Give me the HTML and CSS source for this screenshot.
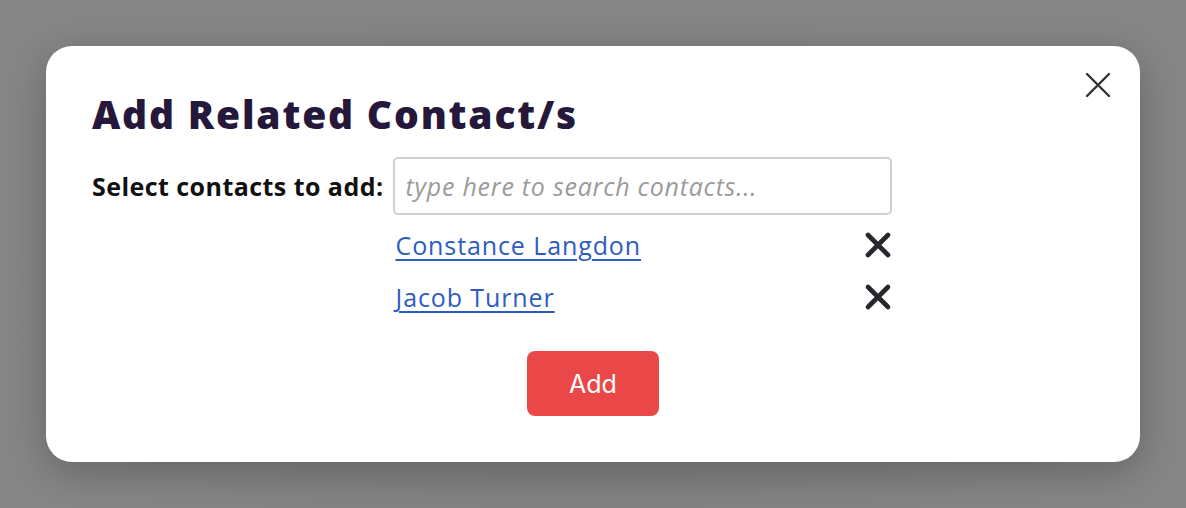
FILE: index.html
```html
<!DOCTYPE html>
<html>
<head>
<meta charset="utf-8">
<link rel="stylesheet" href="styles.css">
</head>
<body>
<div class="overlay">
  <div class="modal">
    <button class="close" aria-label="Close">
      <svg width="26" height="26" viewBox="0 0 26 26"><path d="M2 2 L24 24 M24 2 L2 24" stroke="#333" stroke-width="2.4" stroke-linecap="round"/></svg>
    </button>
    <h1 class="title">Add Related Contact/s</h1>
    <div class="row">
      <label class="label">Select contacts to add:</label>
      <div class="field">
        <input class="search" type="text" placeholder="type here to search contacts...">
        <ul class="list">
          <li class="item"><a href="#" class="link">Constance Langdon</a>
            <svg class="remove" width="28" height="28" viewBox="0 0 28 28"><path d="M4 4 L24 24 M24 4 L4 24" stroke="#24272b" stroke-width="4.6" stroke-linecap="round"/></svg></li>
          <li class="item"><a href="#" class="link">Jacob Turner</a>
            <svg class="remove" width="28" height="28" viewBox="0 0 28 28"><path d="M4 4 L24 24 M24 4 L4 24" stroke="#24272b" stroke-width="4.6" stroke-linecap="round"/></svg></li>
        </ul>
      </div>
    </div>
    <div class="actions">
      <button class="add">Add</button>
    </div>
  </div>
</div>
</body>
</html>
```
FILE: styles.css
```css
html, body { margin: 0; padding: 0; }
body { width: 1186px; height: 508px; overflow: hidden; background: #858585; font-family: "Open Sans", sans-serif; }
.overlay { padding: 46px 46px 0 46px; height: 508px; box-sizing: border-box; background: radial-gradient(ellipse at 50% 60%, #7c7c7c 0%, #868686 70%); }
.modal { position: relative; background: #fff; border-radius: 26px; height: 416px; box-sizing: border-box; padding: 40px 46px 0 46px; box-shadow: 0 10px 40px rgba(0,0,0,0.25); }
.close { position: absolute; top: 26px; right: 29px; background: none; border: 0; padding: 0; width: 26px; height: 26px; cursor: pointer; }
.close svg { display: block; }
.title { margin: 0; font-family: "Open Sans", sans-serif; font-weight: 800; font-size: 39px; line-height: 56px; color: #25183a; letter-spacing: 1.8px; }
.row { display: flex; align-items: flex-start; margin-top: 15px; gap: 9px; }
.label { font-family: "Open Sans", sans-serif; font-weight: 700; font-size: 25px; line-height: 58px; color: #111; letter-spacing: 0.45px; }
.field { width: 499px; flex: none; }
.search { display: block; width: 499px; height: 58px; box-sizing: border-box; border: 2px solid #d0d0d0; border-radius: 5px; padding: 0 11px; font-family: "Open Sans", sans-serif; font-size: 25px; letter-spacing: 0.75px; outline: none; }
.search::placeholder { color: #9b9b9b; font-style: italic; }
.list { list-style: none; margin: 4px 0 0 0; padding: 0; }
.item { display: flex; justify-content: space-between; align-items: center; height: 52px; padding-left: 3px; }
.link { font-family: "Open Sans", sans-serif; font-size: 25px; color: #2e5cbf; text-decoration: underline; text-underline-offset: 4px; text-decoration-thickness: 2px; letter-spacing: 0.9px; }
.remove { display: block; }
.actions { display: flex; justify-content: center; margin-top: 28px; }
.add { width: 132px; height: 65px; background: #ea4848; color: #fff; border: 0; border-radius: 8px; font-family: "Inter", sans-serif; font-size: 25px; cursor: pointer; }
```
